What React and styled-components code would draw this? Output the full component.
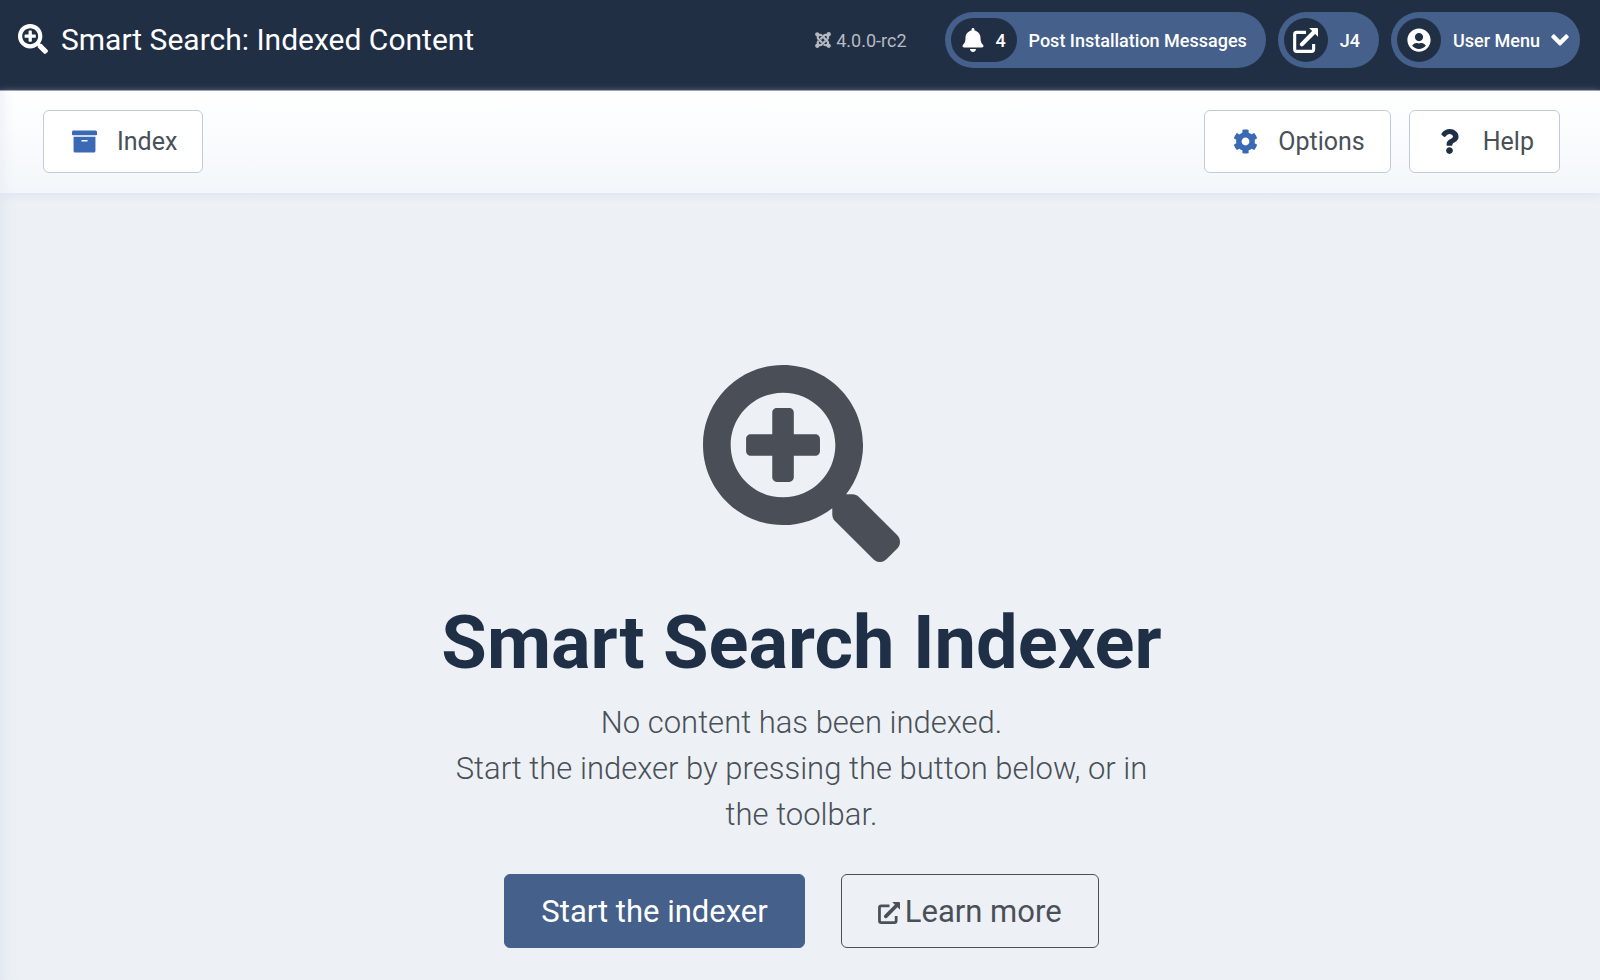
import React from "react";
import styled, { createGlobalStyle } from "styled-components";
import {
  FaAngleDown,
  FaArchive,
  FaBell,
  FaCog,
  FaJoomla,
  FaQuestion,
  FaSearchPlus,
  FaUserCircle,
} from "react-icons/fa";

const ExternalLinkIcon = ({ size }) => (
  <svg width={size} height={size} viewBox="0 0 24 24" aria-hidden="true">
    <path
      d="M12.5 4.2H3.6a2 2 0 0 0-2 2v14.2a2 2 0 0 0 2 2h14.2a2 2 0 0 0 2-2v-5"
      fill="none"
      stroke="currentColor"
      strokeWidth="3"
    />
    <path d="M8.5 15.7L20 4" fill="none" stroke="currentColor" strokeWidth="4" strokeLinecap="round" />
    <path d="M15.5 0H23a1 1 0 0 1 1 1v7.5z" fill="currentColor" />
  </svg>
);

const App = () => {
  return (
    <>
      <GlobalStyle />
      <Header>
        <PageTitle>
          <FaSearchPlus size={30} aria-hidden="true" />
          Smart Search: Indexed Content
        </PageTitle>
        <HeaderItems>
          <Version>
            <FaJoomla size={18} aria-hidden="true" />
            4.0.0-rc2
          </Version>
          <PillLink href="#messages">
            <PillBadge $wide>
              <FaBell size={24} aria-hidden="true" />
              4
            </PillBadge>
            Post Installation Messages
          </PillLink>
          <PillLink href="#site">
            <PillBadge>
              <ExternalLinkIcon size={25} />
            </PillBadge>
            J4
          </PillLink>
          <PillButton type="button">
            <PillBadge>
              <FaUserCircle size={24} aria-hidden="true" />
            </PillBadge>
            User Menu
            <MenuArrow size={28} aria-hidden="true" />
          </PillButton>
        </HeaderItems>
      </Header>
      <Body>
        <Toolbar>
          <ToolbarButton type="button">
            <ToolbarIcon>
              <FaArchive aria-hidden="true" />
            </ToolbarIcon>
            Index
          </ToolbarButton>
          <ToolbarGroup>
            <ToolbarButton type="button">
              <ToolbarIcon>
                <FaCog aria-hidden="true" />
              </ToolbarIcon>
              Options
            </ToolbarButton>
            <ToolbarButton type="button">
              <ToolbarIcon $color="#1f2f46">
                <FaQuestion aria-hidden="true" />
              </ToolbarIcon>
              Help
            </ToolbarButton>
          </ToolbarGroup>
        </Toolbar>
        <Main>
          <EmptyState>
            <FaSearchPlus size={197} color="#4a4f57" aria-hidden="true" />
            <EmptyTitle>Smart Search Indexer</EmptyTitle>
            <Lead>
              No content has been indexed.
              <br />
              Start the indexer by pressing the button below, or in the toolbar.
            </Lead>
            <Actions>
              <PrimaryButton type="button">Start the indexer</PrimaryButton>
              <OutlineLink href="#help">
                <ExternalLinkIcon size={22} />
                Learn more
              </OutlineLink>
            </Actions>
          </EmptyState>
        </Main>
      </Body>
    </>
  );
};

export default App;

const GlobalStyle = createGlobalStyle`
  * {
    box-sizing: border-box;
  }

  body {
    margin: 0;
    background-color: #edf1f6;
    color: #495057;
    font-family: Roboto, "Liberation Sans", sans-serif;
  }

  button {
    font-family: inherit;
    cursor: pointer;
  }
`;

const Header = styled.header`
  display: flex;
  justify-content: space-between;
  align-items: flex-start;
  min-height: 91px;
  padding: 12px 20px 0 18px;
  border-bottom: 1px solid #8d95a5;
  background-color: #212f45;
  color: #ffffff;
`;

const PageTitle = styled.h1`
  display: flex;
  align-items: center;
  gap: 13px;
  height: 54px;
  margin: 0;
  font-size: 30px;
  font-weight: 400;
`;

const HeaderItems = styled.div`
  display: flex;
  align-items: center;
  gap: 12px;
`;

const Version = styled.div`
  display: flex;
  align-items: center;
  gap: 4px;
  margin-right: 26px;
  font-size: 18px;
  color: #b5bac2;
`;

const PillLink = styled.a`
  display: flex;
  align-items: center;
  gap: 12px;
  height: 56px;
  padding: 0 19px 0 6px;
  border-radius: 28px;
  background-color: #45608a;
  color: #ffffff;
  font-size: 18px;
  font-weight: 500;
  text-decoration: none;
`;

const PillButton = styled(PillLink).attrs({ as: "button" })`
  padding-right: 12px;
  border: 0;
`;

/* the glyph is narrower than its box, so trim both sides */
const MenuArrow = styled(FaAngleDown)`
  margin: 0 -6px;
`;

const PillBadge = styled.span`
  display: flex;
  justify-content: center;
  align-items: center;
  gap: 10px;
  width: ${({ $wide }) => ($wide ? "66px" : "44px")};
  height: 44px;
  border-radius: 22px;
  background-color: #212f45;
`;

const Body = styled.div`
  min-height: calc(100vh - 91px);
  box-shadow: inset 16px 0 16px -14px #dde4ee;
`;

const Toolbar = styled.div`
  display: flex;
  justify-content: space-between;
  padding: 19px 40px 20px 43px;
  background-image: linear-gradient(#ffffff, #f3f7fb);
  box-shadow: 0 3px 8px #dfe4ec, inset 16px 0 16px -14px #e8edf4;
`;

const ToolbarGroup = styled.div`
  display: flex;
  gap: 18px;
`;

const ToolbarButton = styled.button`
  display: flex;
  align-items: center;
  gap: 18px;
  height: 63px;
  padding: 0 25px;
  border: 1px solid #c3cbd6;
  border-radius: 6px;
  background-color: #ffffff;
  color: #495057;
  font-size: 25px;
`;

const ToolbarIcon = styled.span`
  display: flex;
  justify-content: center;
  width: 30px;
  font-size: 25px;
  color: ${({ $color }) => $color || "#3a6ab4"};
`;

const Main = styled.main`
  padding: 172px 40px 31px 43px;
`;

const EmptyState = styled.section`
  display: flex;
  flex-direction: column;
  align-items: center;
  max-width: 720px;
  margin: 0 auto;
  text-align: center;
`;

const EmptyTitle = styled.h2`
  margin: 33px 0 9px;
  font-size: 74px;
  font-weight: 700;
  line-height: 96px;
  white-space: nowrap;
  color: #1f2f46;
`;

const Lead = styled.p`
  margin: 0 0 36px;
  font-size: 31px;
  font-weight: 300;
  line-height: 46px;
`;

const Actions = styled.div`
  display: flex;
  gap: 36px;
`;

const PrimaryButton = styled.button`
  display: flex;
  align-items: center;
  gap: 5px;
  height: 74px;
  padding: 0 36px;
  border: 1px solid #45608a;
  border-radius: 6px;
  background-color: #45608a;
  color: #ffffff;
  font-size: 31px;
`;

const OutlineLink = styled(PrimaryButton).attrs({ as: "a" })`
  border-color: #495057;
  background-color: transparent;
  color: #495057;
  text-decoration: none;

  svg {
    margin-top: 4px;
  }
`;
